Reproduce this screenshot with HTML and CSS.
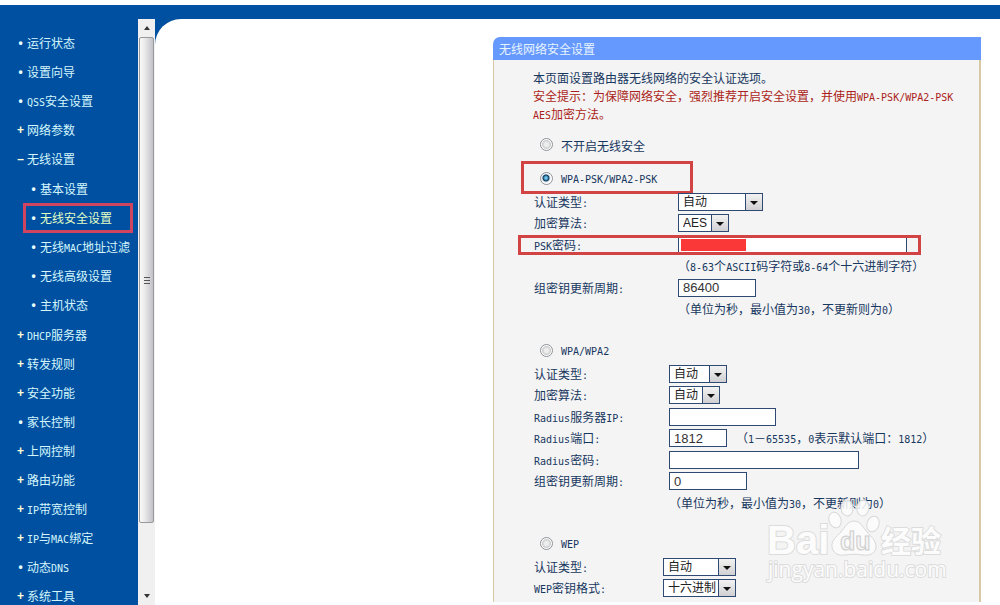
FILE: index.html
```html
<!DOCTYPE html>
<html lang="zh-CN">
<head>
<meta charset="utf-8">
<title>无线网络安全设置</title>
<link rel="stylesheet" href="styles.css">
</head>
<body>
<div class="app">
  <nav class="sidebar">
    <ul class="menu">
      <li class="item dot"><a href="#">运行状态</a></li>
      <li class="item dot"><a href="#">设置向导</a></li>
      <li class="item dot"><a href="#"><span class="en">QSS</span>安全设置</a></li>
      <li class="item plus"><a href="#">网络参数</a></li>
      <li class="item minus"><a href="#">无线设置</a></li>
      <li>
        <ul class="submenu">
          <li class="item dot"><a href="#">基本设置</a></li>
          <li class="item dot current"><a href="#" aria-current="page">无线安全设置</a></li>
          <li class="item dot"><a href="#">无线<span class="en">MAC</span>地址过滤</a></li>
          <li class="item dot"><a href="#">无线高级设置</a></li>
          <li class="item dot"><a href="#">主机状态</a></li>
        </ul>
      </li>
      <li class="item plus"><a href="#"><span class="en">DHCP</span>服务器</a></li>
      <li class="item plus"><a href="#">转发规则</a></li>
      <li class="item plus"><a href="#">安全功能</a></li>
      <li class="item dot"><a href="#">家长控制</a></li>
      <li class="item plus"><a href="#">上网控制</a></li>
      <li class="item plus"><a href="#">路由功能</a></li>
      <li class="item plus"><a href="#"><span class="en">IP</span>带宽控制</a></li>
      <li class="item plus"><a href="#"><span class="en">IP</span>与<span class="en">MAC</span>绑定</a></li>
      <li class="item dot"><a href="#">动态<span class="en">DNS</span></a></li>
      <li class="item plus"><a href="#">系统工具</a></li>
    </ul>
  </nav>
  <div class="scrollbar" aria-hidden="true">
    <div class="arrow"><svg width="8" height="5" viewBox="0 0 8 5"><path d="M4 0L7 4H1Z" fill="#333"/></svg></div>
    <div class="thumb"><svg width="8" height="8" viewBox="0 0 8 8"><path d="M1 1.5H7M1 4.5H7M1 7.5H7" stroke="#555"/></svg></div>
    <div class="track"></div>
    <div class="arrow"><svg width="8" height="5" viewBox="0 0 8 5"><path d="M1 0H7L4 4Z" fill="#333"/></svg></div>
  </div>
  <main class="main">
    <form class="panel">
      <h1 class="title">无线网络安全设置</h1>
      <div class="body">
        <div class="intro">
          <p>本页面设置路由器无线网络的安全认证选项。</p>
          <p class="warn">安全提示：为保障网络安全，强烈推荐开启安全设置，并使用<span class="en">WPA-PSK/WPA2-PSK</span> <span class="en">AES</span>加密方法。</p>
        </div>

        <div class="choice first"><input type="radio" name="sec" id="off"><label for="off">不开启无线安全</label></div>

        <div class="choice second marked"><input type="radio" name="sec" id="psk" checked><label for="psk" class="en">WPA-PSK/WPA2-PSK</label></div>
        <div class="fields psk">
          <label for="a1">认证类型<span class="en">:</span></label>
          <span class="select w85"><select id="a1"><option>自动</option></select></span>
          <label for="c1">加密算法<span class="en">:</span></label>
          <span class="select w51"><select id="c1"><option>AES</option></select></span>
          <div class="line marked">
            <label for="p1"><span class="en">PSK</span>密码<span class="en">:</span></label>
            <span class="secret"><input type="text" id="p1" class="w229"></span>
          </div>
          <p class="hint">（<span class="en">8-63</span>个<span class="en">ASCII</span>码字符或<span class="en">8-64</span>个十六进制字符）</p>
          <label for="g1">组密钥更新周期<span class="en">:</span></label>
          <input type="text" id="g1" class="w78" value="86400">
          <p class="hint">（单位为秒，最小值为<span class="en">30</span>，不更新则为<span class="en">0</span>）</p>
        </div>

        <div class="choice"><input type="radio" name="sec" id="wpa"><label for="wpa" class="en">WPA/WPA2</label></div>
        <div class="fields wpa">
          <label for="a2">认证类型<span class="en">:</span></label>
          <span class="select w58"><select id="a2"><option>自动</option></select></span>
          <label for="c2">加密算法<span class="en">:</span></label>
          <span class="select w51"><select id="c2"><option>自动</option></select></span>
          <label for="rip"><span class="en">Radius</span>服务器<span class="en">IP:</span></label>
          <input type="text" id="rip" class="w107">
          <label for="rport"><span class="en">Radius</span>端口<span class="en">:</span></label>
          <span class="pair"><input type="text" id="rport" class="w58" value="1812"><span>（<span class="en">1</span>－<span class="en">65535</span>，<span class="en">0</span>表示默认端口：<span class="en">1812</span>）</span></span>
          <label for="rpw"><span class="en">Radius</span>密码<span class="en">:</span></label>
          <input type="text" id="rpw" class="w190">
          <label for="g2">组密钥更新周期<span class="en">:</span></label>
          <input type="text" id="g2" class="w78" value="0">
          <p class="hint">（单位为秒，最小值为<span class="en">30</span>，不更新则为<span class="en">0</span>）</p>
        </div>

        <div class="choice"><input type="radio" name="sec" id="wep"><label for="wep" class="en">WEP</label></div>
        <div class="fields wep">
          <label for="a3">认证类型<span class="en">:</span></label>
          <span class="select w73"><select id="a3"><option>自动</option></select></span>
          <label for="f3"><span class="en">WEP</span>密钥格式<span class="en">:</span></label>
          <span class="select w73"><select id="f3"><option>十六进制</option></select></span>
        </div>
      </div>
    </form>
    <svg class="watermark" width="186" height="88" viewBox="0 0 186 88">
      <g fill="#fcfcfc" fill-opacity=".85" stroke="#d8d8d8" stroke-width="1">
        <ellipse cx="70" cy="23" rx="6" ry="8" transform="rotate(-18 70 23)"/>
        <ellipse cx="82" cy="11" rx="6" ry="8" transform="rotate(-5 82 11)"/>
        <ellipse cx="98" cy="11" rx="6" ry="8" transform="rotate(10 98 11)"/>
        <ellipse cx="108" cy="27" rx="6" ry="8" transform="rotate(20 108 27)"/>
        <path d="M89 24C83 24 80 30 76 35C71 40 66 44 67 50C68 56 73 59 80 58C86 57 92 57 98 58C105 59 111 56 111 50C111 43 106 40 102 35C98 30 95 24 89 24Z"/>
      </g>
      <g class="mark">
        <text class="logo" x="2" y="57">Bai</text>
        <text class="logo-cn" x="116" y="55">经验</text>
        <text class="site" x="3" y="80">jingyan.baidu.com</text>
      </g>
      <text class="du" x="75" y="53">du</text>
    </svg>
  </main>
</div>
</body>
</html>
```
FILE: styles.css
```css
* {
  box-sizing: border-box;
}

body {
  margin: 0;
  background: #fff;
  color: #17375f;
  font: 12px/18px "Noto Sans CJK SC", sans-serif;
}

ul, p, h1 {
  margin: 0;
  padding: 0;
  list-style: none;
}

.en {
  font-family: "DejaVu Sans Mono", monospace;
  font-size: 10px;
  line-height: 10px;
  white-space: nowrap;
}

.app {
  display: flex;
  height: 100vh;
  border-top: 5px solid #fdfeff;
  padding-top: 14px;
  background: #0050a2;
  overflow: hidden;
}

/* Sidebar */

.sidebar {
  flex: 0 0 138px;
  padding-top: 9px;
}

.menu {
  padding-left: 14px;
}

.submenu {
  padding: 1px 0 1px 13px;
}

.item {
  position: relative;
  display: flex;
  height: 29px;
  align-items: center;
  white-space: nowrap;
}

.item::before {
  flex: 0 0 13px;
  color: #ffffd8;
  font: bold 12px/18px "Liberation Sans", sans-serif;
  text-align: center;
}

.dot::before {
  content: "•";
  color: #e8ffff;
}

.plus::before {
  content: "+";
}

.minus::before {
  content: "–";
}

.item a {
  color: #d4f6fb;
  text-decoration: none;
}

.current a {
  color: #e4ffc4;
}

.current::after {
  content: "";
  position: absolute;
  inset: 0 5px -1px -4px;
  border: 3px solid #cf4560;
}

/* Scrollbar beside the menu */

.scrollbar {
  display: flex;
  flex: 0 0 17px;
  flex-direction: column;
  background: #f0f0f0;
}

.arrow {
  display: grid;
  flex: 0 0 18px;
  place-items: center;
}

.thumb {
  display: grid;
  flex: 486 1 0;
  place-items: center;
  margin: 0 1px;
  border: 1px solid #999;
  border-radius: 2px;
  background: linear-gradient(90deg, #fafafa, #e8e8e8 40%, #c0c0c8);
}

.track {
  flex: 64 1 0;
}

/* Settings panel */

.main {
  position: relative;
  display: flex;
  flex: 1;
  border-bottom: 3px solid #fafdff;
  border-top-left-radius: 26px;
  padding: 18px 19px 0;
  background: #fff;
  overflow: hidden;
}

.panel {
  flex: 0 0 488px;
  margin-left: auto;
}

.title {
  height: 23px;
  border-top-left-radius: 7px;
  padding-left: 6px;
  background: #6699fe;
  color: #e6f4ff;
  font-size: 12px;
  font-weight: normal;
  line-height: 23px;
}

.body {
  min-height: 100%;
  border: solid #d9c8a4;
  border-width: 0 2px 0 1px;
  padding: 9px 16px 0 39px;
  background: #f4f4f4;
}

.warn {
  color: #ab1f20;
}

.choice {
  position: relative;
  display: flex;
  height: 22px;
  align-items: center;
  gap: 8px;
  margin-top: 21px;
  padding-left: 7px;
}

.first {
  margin-top: 12px;
}

.second {
  margin-top: 12px;
}

.choice input {
  width: 13px;
  height: 13px;
  margin: 0 0 4px;
  border: 1px solid #8e9399;
  border-radius: 50%;
  appearance: none;
  background: radial-gradient(#eee 0 2px, #ccc 4px, #fff 5px);
}

.choice input:checked {
  background: radial-gradient(circle at 5px 5px, #6cc8ee 0 1px, #123b60 3px, #dfe7ee 4px, #fff 5px);
}

.fields {
  display: grid;
  grid-template-columns: 144px 1fr;
  grid-auto-rows: 21px 22px;
  align-items: center;
  padding-left: 1px;
}

.wpa {
  grid-template-columns: 135px 1fr;
}

.wep {
  grid-template-columns: 129px 1fr;
}

.line {
  position: relative;
  display: grid;
  grid-column: 1 / -1;
  grid-template-columns: subgrid;
  align-items: center;
}

.hint {
  grid-column: 2;
  white-space: nowrap;
}

.pair {
  display: flex;
  align-items: center;
  gap: 9px;
  white-space: nowrap;
}

input[type="text"],
select {
  height: 18px;
  margin: 0;
  border: 1px solid #2e4a72;
  border-radius: 0;
  padding: 0 4px;
  background: #fff;
  color: #333;
  font: 13px/16px "Liberation Sans", "Noto Sans CJK SC", sans-serif;
}

select {
  display: block;
  width: 100%;
  appearance: none;
  color: #222;
  font-size: 12px;
}

.select {
  position: relative;
}

.select::before {
  content: "";
  position: absolute;
  inset: 1px 1px 1px auto;
  width: 16px;
  border-left: 1px solid #2e4a72;
  background: linear-gradient(#f2f2f2, #d0d0d4);
  pointer-events: none;
}

.select::after {
  content: "";
  position: absolute;
  top: 8px;
  right: 5px;
  border: 4px solid transparent;
  border-top-color: #111;
  border-bottom: 0;
  pointer-events: none;
}

.w51 { width: 51px; }
.w58 { width: 58px; }
.w73 { width: 73px; }
.w78 { width: 78px; }
.w85 { width: 85px; }
.w107 { width: 107px; }
.w190 { width: 190px; }
.w229 { width: 229px; }

.secret {
  position: relative;
  display: flex;
}

.secret::after {
  content: "";
  position: absolute;
  top: 3px;
  left: 3px;
  width: 65px;
  height: 12px;
  background: #fb3838;
}

/* Red call-out frames */

.marked::after {
  content: "";
  position: absolute;
  border: 3px solid #d24444;
  pointer-events: none;
}

.choice.marked::after {
  inset: -8px 270px -3px -12px;
}

.line.marked::after {
  inset: -1px 42px -1px -16px;
}

/* Watermark */

.watermark {
  position: absolute;
  right: 49px;
  bottom: 17px;
  overflow: visible;
  pointer-events: none;
}

.mark {
  fill: #fcfcfc;
  stroke: #dcdcdc;
  stroke-width: 2px;
  paint-order: stroke;
}

.logo {
  font: bold 40px "Liberation Sans", sans-serif;
}

.logo-cn {
  font: bold 30px "Noto Sans CJK SC", sans-serif;
}

.site {
  font: 21px "Open Sans", sans-serif;
}

.du {
  fill: #f4f4f4;
  stroke: #cdcdcd;
  font: bold 25px "Liberation Sans", sans-serif;
}
```
